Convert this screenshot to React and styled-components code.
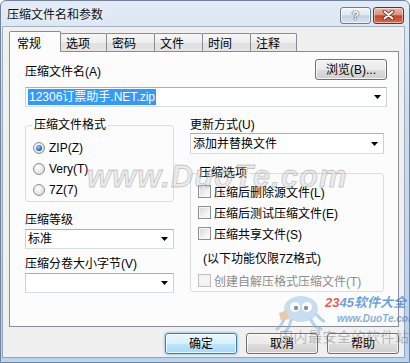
import React from 'react';
import styled, { createGlobalStyle } from 'styled-components';

const GlobalStyle = createGlobalStyle`
  html, body {
    margin: 0;
    padding: 0;
    background: #fff;
  }
  body {
    font-family: "Liberation Sans", "Noto Sans CJK SC", sans-serif;
    font-size: 12px;
    color: #000;
  }
`;

const Window = styled.div`
  position: relative;
  width: 410px;
  height: 363px;
  box-sizing: border-box;
  display: flex;
  flex-direction: column;
  border: 1px solid #71839a;
  border-radius: 6px 6px 0 0;
  overflow: hidden;
  background: linear-gradient(180deg, #e2ebf5 0%, #cddced 30%, #c2d5ea 70%, #b8d4ee 100%);
`;

const TitleBar = styled.div`
  flex: none;
  height: 26px;
  display: flex;
  align-items: center;
  justify-content: space-between;
  padding: 0 5px 0 6px;
`;

const Title = styled.span`
  font-family: "Noto Sans CJK SC", sans-serif;
  font-size: 12px;
  line-height: 16px;
  color: #111;
  text-shadow: 0 0 6px rgba(255, 255, 255, 0.9);
`;

const CaptionGroup = styled.div`
  display: flex;
  gap: 2px;
  margin-top: 2px;
`;

const CaptionButton = styled.div`
  width: ${p => (p.$close ? 31 : 31)}px;
  height: 17px;
  box-sizing: border-box;
  border: 1px solid ${p => (p.$close ? '#6e2f23' : '#6d7c8e')};
  border-radius: 3px;
  display: flex;
  align-items: center;
  justify-content: center;
  box-shadow: inset 0 0 0 1px rgba(255, 255, 255, 0.5);
  background: ${p =>
    p.$close
      ? 'linear-gradient(180deg, #edb7a8 0%, #df907b 45%, #c5432a 52%, #d96a4c 100%)'
      : 'linear-gradient(180deg, #f3f6fa 0%, #dfe7f0 45%, #c5d2e1 52%, #d8e3ee 100%)'};
`;

const HelpGlyph = styled.span`
  font-family: "Liberation Sans", sans-serif;
  font-weight: bold;
  font-size: 13px;
  line-height: 13px;
  color: #fff;
  text-shadow: 0 0 1px #3f4f63, 0 0 1px #3f4f63, 0 0 1px #3f4f63;
`;

const Body = styled.div`
  flex: 1;
  margin: 0 5px 5px 2px;
  padding: 4px 5px 0 6px;
  background: #f0f0f0;
  display: flex;
  flex-direction: column;
  box-shadow: 0 0 0 1px rgba(90, 110, 140, 0.45);
`;

const TabRow = styled.div`
  display: flex;
  align-items: flex-end;
  height: 21px;
`;

const Tab = styled.div`
  box-sizing: border-box;
  width: ${p => p.$w}px;
  height: ${p => (p.$active ? 21 : 19)}px;
  margin-left: ${p => (p.$first ? 0 : -1)}px;
  padding: ${p => (p.$active ? '3px 0 0 7px' : '1px 0 0 5px')};
  border: 1px solid #898c95;
  border-bottom: none;
  border-radius: 2px 2px 0 0;
  font-family: "Noto Sans CJK SC", sans-serif;
  font-size: 12px;
  line-height: 16px;
  background: ${p =>
    p.$active
      ? '#fcfcfc'
      : 'linear-gradient(180deg, #f7f7f7 0%, #eeeeee 50%, #e0e0e0 52%, #e6e6e6 100%)'};
  position: ${p => (p.$active ? 'relative' : 'static')};
  z-index: ${p => (p.$active ? 2 : 'auto')};
`;

const Panel = styled.div`
  position: relative;
  z-index: 1;
  margin-top: -1px;
  height: 276px;
  box-sizing: border-box;
  border: 1px solid #898c95;
  background: #fcfcfc;
  padding: 7px 11px 0 15px;
`;

const HeadRow = styled.div`
  display: flex;
  justify-content: space-between;
  align-items: flex-end;
`;

const Label = styled.div`
  font-size: 12px;
  line-height: 16px;
  margin-top: ${p => p.$mt || 0}px;
  white-space: nowrap;
`;

const Combo = styled.div`
  box-sizing: border-box;
  height: ${p => p.$h || 20}px;
  margin-top: ${p => p.$mt || 0}px;
  border: 1px solid;
  border-color: #a9b0b9 #cdd2d9 #d8dde3 #cdd2d9;
  background: #fff;
  display: flex;
  align-items: center;
  padding-left: 2px;
  font-size: 12px;
  line-height: 16px;
`;

const Selected = styled.span`
  background: #3399ff;
  color: #fff;
  padding: 0 1px;
`;

const Arrow = styled.span`
  margin-left: auto;
  width: 17px;
  height: 100%;
  display: flex;
  align-items: center;
  justify-content: center;
`;

const Columns = styled.div`
  display: grid;
  grid-template-columns: 149px 194px;
  column-gap: 16px;
  margin-top: 10px;
`;

const Column = styled.div`
  display: flex;
  flex-direction: column;
`;

const Group = styled.fieldset`
  margin: ${p => p.$mt || 0}px 0 0 0;
  padding: 0 0 ${p => p.$pb || 0}px 7px;
  min-width: 0;
  border: 1px solid #d5dfe5;
  border-radius: 3px;
  display: flex;
  flex-direction: column;
`;

const Legend = styled.legend`
  margin-left: -1px;
  padding: 0 2px;
  font-size: 12px;
  line-height: 16px;
`;

const OptionRow = styled.label`
  display: flex;
  align-items: center;
  gap: ${p => p.$gap || 4}px;
  height: 21px;
  margin-top: ${p => p.$mt || 0}px;
  font-size: 12px;
  color: ${p => (p.$disabled ? '#8d8d8d' : '#000')};
  white-space: nowrap;
`;

const Radio = styled.span`
  flex: none;
  width: 12px;
  height: 12px;
  box-sizing: border-box;
  border-radius: 50%;
  border: 1px solid #8e8f8f;
  background: radial-gradient(circle at 40% 35%, #ffffff 0%, #e6e6e6 55%, #cdcdcd 100%);
  display: flex;
  align-items: center;
  justify-content: center;
  &::after {
    content: '';
    display: ${p => (p.$checked ? 'block' : 'none')};
    width: 6px;
    height: 6px;
    border-radius: 50%;
    background: radial-gradient(circle at 40% 35%, #9ad4fa 0%, #2a6fbf 60%, #174a88 100%);
  }
`;

const Check = styled.span`
  flex: none;
  width: 13px;
  height: 13px;
  box-sizing: border-box;
  border: 1px solid ${p => (p.$disabled ? '#c2c2c2' : '#8f8f8f')};
  background: ${p =>
    p.$disabled ? '#f5f5f5' : 'linear-gradient(135deg, #d6d6d6 0%, #f1f1f1 60%, #ffffff 100%)'};
  box-shadow: inset 0 0 0 1px ${p => (p.$disabled ? '#f0f0f0' : '#f6f6f6')};
`;

const Note = styled.div`
  margin-top: 6px;
  height: 18px;
  line-height: 18px;
  padding-left: 5px;
  font-size: 12px;
`;

const ButtonRow = styled.div`
  display: flex;
  justify-content: flex-end;
  gap: 9px;
  margin-top: 6px;
`;

const Button = styled.div`
  width: 72px;
  height: 21px;
  box-sizing: border-box;
  border: 1px solid ${p => (p.$default ? '#3c7fb1' : '#707070')};
  border-radius: 3px;
  display: flex;
  align-items: center;
  justify-content: center;
  font-size: 12px;
  line-height: 16px;
  box-shadow: inset 0 0 0 1px rgba(255, 255, 255, 0.75)
    ${p => (p.$default ? ', 0 0 2px 1px rgba(96, 180, 230, 0.55)' : '')};
  background: ${p =>
    p.$default
      ? 'linear-gradient(180deg, #eaf6fd 0%, #d9f0fc 50%, #bee6fd 52%, #a7d9f5 100%)'
      : 'linear-gradient(180deg, #f2f2f2 0%, #ebebeb 50%, #dddddd 52%, #cfcfcf 100%)'};
`;

const Watermark = styled.div`
  position: absolute;
  left: 86px;
  top: 158px;
  font-family: "Liberation Sans", sans-serif;
  font-style: italic;
  font-weight: bold;
  font-size: 31px;
  letter-spacing: 1px;
  color: rgba(200, 200, 200, 0.35);
  -webkit-text-stroke: 0.8px rgba(110, 110, 110, 0.35);
  pointer-events: none;
  z-index: 5;
`;

const Logo = styled.div`
  position: absolute;
  left: 274px;
  top: 292px;
  width: 140px;
  display: grid;
  grid-template-columns: 50px 1fr;
  pointer-events: none;
  z-index: 5;
`;

const LogoText = styled.div`
  display: flex;
  flex-direction: column;
  padding-top: 2px;
`;

const Brand = styled.div`
  font-family: "Liberation Sans", "Noto Sans CJK SC", sans-serif;
  font-style: italic;
  font-weight: bold;
  font-size: 13px;
  line-height: 15px;
  color: rgba(60, 130, 210, 0.75);
  white-space: nowrap;
`;

const Red = styled.span`
  color: rgba(226, 50, 40, 0.8);
`;

const Url = styled.div`
  margin-top: 3px;
  font-family: "Liberation Sans", sans-serif;
  font-style: italic;
  font-weight: bold;
  font-size: 10px;
  line-height: 12px;
  color: rgba(50, 120, 200, 0.6);
  padding-left: 12px;
`;

const Slogan = styled.div`
  position: absolute;
  left: 278px;
  top: 327px;
  font-family: "Noto Sans CJK SC", sans-serif;
  font-size: 14px;
  line-height: 16px;
  letter-spacing: 0.5px;
  color: rgba(110, 110, 110, 0.45);
  white-space: nowrap;
  pointer-events: none;
  z-index: 5;
`;

const DropArrow = () => (
  <Arrow>
    <svg width="7" height="4" viewBox="0 0 7 4">
      <path d="M0 0 H7 L3.5 4 Z" fill="#000" />
    </svg>
  </Arrow>
);

const CloseGlyph = () => (
  <svg width="13" height="10" viewBox="0 0 13 10">
    <path d="M2.5 1.5 L10.5 8.5 M10.5 1.5 L2.5 8.5" stroke="#5a2217" strokeWidth="3.6" strokeLinecap="round" />
    <path d="M2.5 1.5 L10.5 8.5 M10.5 1.5 L2.5 8.5" stroke="#fff" strokeWidth="2" strokeLinecap="round" />
  </svg>
);

const Mascot = () => (
  <svg width="50" height="40" viewBox="0 0 50 40" opacity="0.55">
    <ellipse cx="26" cy="16" rx="17" ry="13" fill="#9cc6e8" />
    <path d="M10 24 Q6 34 2 36 M16 27 Q14 36 10 39 M36 27 Q40 35 46 36 M42 22 Q47 28 49 28" stroke="#7fb1dc" strokeWidth="3" fill="none" strokeLinecap="round" />
    <circle cx="20" cy="14" r="5" fill="#fff" />
    <circle cx="32" cy="14" r="5" fill="#fff" />
    <circle cx="21" cy="15" r="2.2" fill="#2a3b55" />
    <circle cx="31" cy="15" r="2.2" fill="#2a3b55" />
    <path d="M4 20 L12 17 L14 26 L6 28 Z" fill="#d9a066" />
  </svg>
);

const tabs = [
  { name: '常规', w: 52 },
  { name: '选项', w: 47 },
  { name: '密码', w: 49 },
  { name: '文件', w: 49 },
  { name: '时间', w: 49 },
  { name: '注释', w: 47 },
];

const formats = [
  { label: 'ZIP(Z)', checked: true },
  { label: 'Very(T)' },
  { label: '7Z(7)' },
];

const options = ['压缩后删除源文件(L)', '压缩后测试压缩文件(E)', '压缩共享文件(S)'];

export default function App() {
  return (
    <>
      <GlobalStyle />
      <Window>
        <TitleBar>
          <Title>压缩文件名和参数</Title>
          <CaptionGroup>
            <CaptionButton>
              <HelpGlyph>?</HelpGlyph>
            </CaptionButton>
            <CaptionButton $close>
              <CloseGlyph />
            </CaptionButton>
          </CaptionGroup>
        </TitleBar>

        <Body>
          <TabRow>
            {tabs.map((t, i) => (
              <Tab key={t.name} $w={t.w} $active={i === 0} $first={i === 0}>
                {t.name}
              </Tab>
            ))}
          </TabRow>

          <Panel>
            <HeadRow>
              <Label>压缩文件名(A)</Label>
              <Button>浏览(B)...</Button>
            </HeadRow>
            <Combo $mt={7}>
              <Selected>12306订票助手.NET.zip</Selected>
              <DropArrow />
            </Combo>

            <Columns>
              <Column>
                <Group $pb={1}>
                  <Legend>压缩文件格式</Legend>
                  <div style={{ height: 4 }} />
                  {formats.map(f => (
                    <OptionRow key={f.label}>
                      <Radio $checked={f.checked} />
                      {f.label}
                    </OptionRow>
                  ))}
                </Group>
                <Label $mt={10}>压缩等级</Label>
                <Combo $mt={1}>
                  标准
                  <DropArrow />
                </Combo>
                <Label $mt={7}>压缩分卷大小字节(V)</Label>
                <Combo $mt={1}>
                  <DropArrow />
                </Combo>
              </Column>

              <Column>
                <Label>更新方式(U)</Label>
                <Combo $h={21}>
                  添加并替换文件
                  <DropArrow />
                </Combo>
                <Group $mt={11}>
                  <Legend>压缩选项</Legend>
                  {options.map(o => (
                    <OptionRow key={o} $gap={3}>
                      <Check />
                      {o}
                    </OptionRow>
                  ))}
                  <Note>(以下功能仅限7Z格式)</Note>
                  <OptionRow $gap={3} $mt={2} $disabled>
                    <Check $disabled />
                    创建自解压格式压缩文件(T)
                  </OptionRow>
                </Group>
              </Column>
            </Columns>
          </Panel>

          <ButtonRow>
            <Button $default>确定</Button>
            <Button>取消</Button>
            <Button>帮助</Button>
          </ButtonRow>
        </Body>

        <Watermark>www.DuoTe.com</Watermark>
        <Logo>
          <Mascot />
          <LogoText>
            <Brand>
              <Red>23</Red>45软件大全
            </Brand>
            <Url>www.DuoTe.com</Url>
          </LogoText>
        </Logo>
        <Slogan>国内最安全的软件站</Slogan>
      </Window>
    </>
  );
}
